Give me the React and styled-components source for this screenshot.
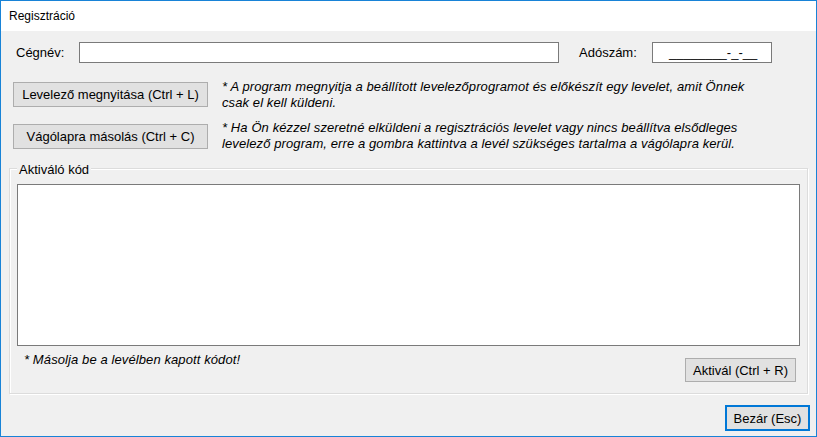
import React from 'react';
import styled, { createGlobalStyle } from 'styled-components';

const GlobalStyle = createGlobalStyle`
  * { box-sizing: border-box; }
  html, body { margin: 0; padding: 0; background: #fff; }
  body { font-family: "Liberation Sans", Arial, sans-serif; font-size: 13px; color: #000; }
`;

const Window = styled.div`
  width: 817px;
  height: 437px;
  border: 1px solid #1883d7;
  display: flex;
  flex-direction: column;
  background: #f0f0f0;
`;

const TitleBar = styled.div`
  height: 30px;
  flex: none;
  background: #fff;
  display: flex;
  align-items: center;
  padding-left: 8px;
  font-size: 12px;
`;

const Body = styled.div`
  flex: 1;
  display: flex;
  flex-direction: column;
  padding: 11px 6px 6px 8px;
`;

const FieldRow = styled.div`
  display: flex;
  align-items: center;
  height: 21px;
  padding-left: ${(p) => p.indent || 0}px;
`;

const Label = styled.label`
  width: ${(p) => p.width}px;
  margin-left: ${(p) => p.gap || 0}px;
  flex: none;
`;

const TextBox = styled.div`
  width: ${(p) => p.width}px;
  height: 21px;
  background: #fff;
  border: 1px solid #7a7a7a;
  display: flex;
  align-items: center;
  padding-left: 16px;
`;

const ActionRow = styled.div`
  display: flex;
  align-items: flex-start;
  height: 25px;
  margin-top: ${(p) => p.top}px;
  padding-left: 4px;
`;

const Button = styled.button`
  font: inherit;
  color: #000;
  width: ${(p) => p.width}px;
  height: ${(p) => p.height || 25}px;
  flex: none;
  background: #e1e1e1;
  border: ${(p) => (p.primary ? '2px solid #0078d7' : '1px solid #adadad')};
  padding: 0;
  margin: 0;
  cursor: pointer;
`;

const Note = styled.p`
  margin: ${(p) => p.offset || 0}px 0 0 14px;
  font-style: italic;
  line-height: 16px;
  letter-spacing: 0.1px;
  width: 540px;
`;

const Group = styled.div`
  position: relative;
  width: 799px;
  height: 226px;
  margin-top: 19px;
  padding: 15px 7px 10px 7px;
  border: 1px solid #dcdcdc;
  box-shadow: inset 1px 1px 0 #fff, 1px 1px 0 #fff;
  display: flex;
  flex-direction: column;
`;

const GroupTitle = styled.span`
  position: absolute;
  top: -7px;
  left: 7px;
  padding: 0 2px;
  background: #f0f0f0;
  line-height: 16px;
`;

const CodeArea = styled.textarea`
  width: 783px;
  height: 162px;
  margin: 0;
  border: 1px solid #7a7a7a;
  background: #fff;
  resize: none;
  font: inherit;
  outline: none;
  flex: none;
`;

const GroupFooter = styled.div`
  display: flex;
  justify-content: space-between;
  align-items: flex-start;
  padding-right: 4px;
  margin-top: 4px;
`;

const FooterNote = styled.p`
  margin: 2px 0 0 7px;
  font-style: italic;
  line-height: 16px;
  letter-spacing: 0.1px;
`;

const ButtonSpacer = styled.div`
  padding-top: 8px;
`;

const Actions = styled.div`
  display: flex;
  justify-content: flex-end;
  margin-top: 11px;
`;

export default function App() {
  return (
    <>
      <GlobalStyle />
      <Window>
        <TitleBar>Regisztráció</TitleBar>
        <Body>
          <FieldRow indent={7}>
            <Label width={63}>Cégnév:</Label>
            <TextBox width={480} />
            <Label width={73} gap={20}>Adószám:</Label>
            <TextBox width={120}>________-_-__</TextBox>
          </FieldRow>

          <ActionRow top={19}>
            <Button width={195}>Levelező megnyitása (Ctrl + L)</Button>
            <Note offset={-3}>
              * A program megnyitja a beállított levelezőprogramot és előkészít egy levelet, amit Önnek csak el kell küldeni.
            </Note>
          </ActionRow>

          <ActionRow top={17}>
            <Button width={195}>Vágólapra másolás (Ctrl + C)</Button>
            <Note offset={-4}>
              * Ha Ön kézzel szeretné elküldeni a regisztrációs levelet vagy nincs beállítva elsődleges levelező program, erre a gombra kattintva a levél szükséges tartalma a vágólapra kerül.
            </Note>
          </ActionRow>

          <Group>
            <GroupTitle>Aktiváló kód</GroupTitle>
            <CodeArea />
            <GroupFooter>
              <FooterNote>* Másolja be a levélben kapott kódot!</FooterNote>
              <ButtonSpacer>
                <Button width={111} height={24}>Aktivál (Ctrl + R)</Button>
              </ButtonSpacer>
            </GroupFooter>
          </Group>

          <Actions>
            <Button width={85} height={26} primary>Bezár (Esc)</Button>
          </Actions>
        </Body>
      </Window>
    </>
  );
}
